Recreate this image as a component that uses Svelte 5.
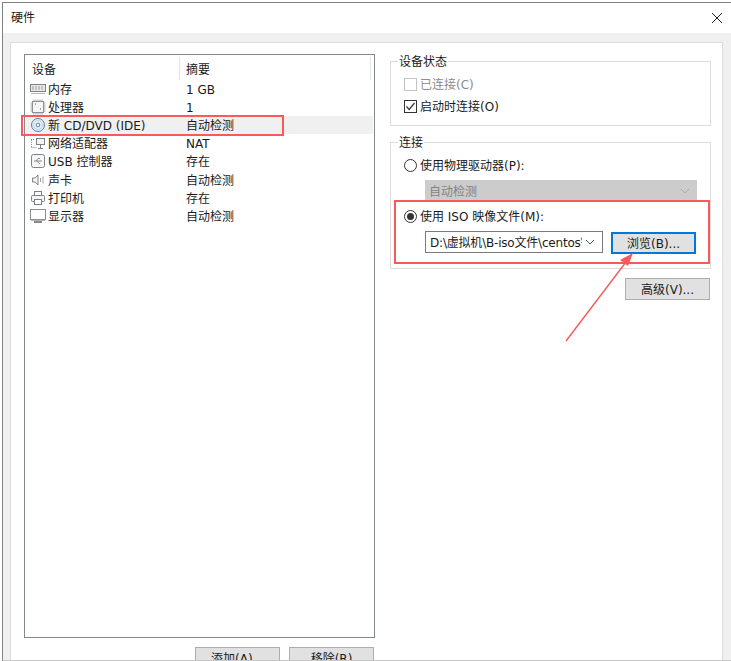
<script>
  const devices = [
    { name: "内存", summary: "1 GB", icon: "mem" },
    { name: "处理器", summary: "1", icon: "cpu" },
    { name: "新 CD/DVD (IDE)", summary: "自动检测", icon: "cd", selected: true },
    { name: "网络适配器", summary: "NAT", icon: "net" },
    { name: "USB 控制器", summary: "存在", icon: "usb" },
    { name: "声卡", summary: "自动检测", icon: "snd" },
    { name: "打印机", summary: "存在", icon: "prn" },
    { name: "显示器", summary: "自动检测", icon: "mon" }
  ];
</script>

<div class="page">
  <div class="window">
    <div class="titlebar">
      <span>硬件</span>
      <svg class="close" width="12" height="12" viewBox="0 0 12 12">
        <path d="M1 1L11 11M11 1L1 11" stroke="#222" stroke-width="1" fill="none" />
      </svg>
    </div>

    <div class="body">
      <div class="panel">
        <div class="left">
          <div class="list">
            <div class="row head">
              <div class="c1"><span class="t">设备</span></div>
              <div class="c2">摘要</div>
            </div>
            {#each devices as d}
              <div class="row" class:selected={d.selected}>
                <div class="c1">
                  <svg class="icon" width="16" height="16" viewBox="0 0 16 16" fill="none" stroke="#7d8287">
                    {#if d.icon === "mem"}
                      <rect x="0.5" y="3.5" width="15" height="7" fill="#e8e8e8" />
                      <path d="M2 6h12M2 8h12" stroke="#a0a0a0" stroke-dasharray="2 1" />
                      <path d="M1 12.5h14" stroke="#b5b5b5" />
                    {:else if d.icon === "cpu"}
                      <rect x="2.5" y="2.5" width="11" height="11" fill="#f6f6f6" stroke="#8a8a8a" />
                      <path d="M4 0.5v2M6 0.5v2M8 0.5v2M10 0.5v2M12 0.5v2M4 13.5v2M6 13.5v2M8 13.5v2M10 13.5v2M12 13.5v2M0.5 4h2M0.5 6h2M0.5 8h2M0.5 10h2M0.5 12h2M13.5 4h2M13.5 6h2M13.5 8h2M13.5 10h2M13.5 12h2" stroke="#a2a2a2" />
                      <path d="M5 5h1M10 10h1" stroke="#555" />
                    {:else if d.icon === "cd"}
                      <circle cx="8" cy="8" r="6.5" fill="#e2eff8" stroke="#5f8196" />
                      <path d="M3.5 8a4.5 4.5 0 0 1 4.5-4.5" stroke="#fff" />
                      <circle cx="8" cy="8" r="4.5" stroke="#bcd4e2" />
                      <circle cx="8" cy="8" r="1.8" fill="#fff" stroke="#5f8196" />
                    {:else if d.icon === "net"}
                      <rect x="6.5" y="3.5" width="8" height="6" fill="#f4f4f4" />
                      <path d="M10.5 10v3M8 13.5h5" />
                      <path d="M1 4.5h4M1.5 5v7M1.5 12.5h6" stroke="#8d8d8d" stroke-dasharray="1 1" />
                    {:else if d.icon === "usb"}
                      <rect x="1.5" y="1.5" width="13" height="13" rx="2" fill="#f7f7f7" />
                      <path d="M4 8h8M6 8l2-2.5h2M7 8l2 2.5h1" stroke="#8b8b8b" />
                    {:else if d.icon === "snd"}
                      <path d="M2.5 6h2.5l3-3v10l-3-3H2.5z" fill="#f4f4f4" />
                      <path d="M10.5 6v4M13 4.5v7" stroke="#a5a5a5" />
                    {:else if d.icon === "prn"}
                      <rect x="4.5" y="1.5" width="7" height="4" fill="#fff" />
                      <rect x="1.5" y="5.5" width="13" height="6" rx="1" fill="#f4f4f4" />
                      <rect x="4.5" y="9.5" width="7" height="5" fill="#fff" />
                    {:else}
                      <rect x="0.5" y="1.5" width="15" height="10" fill="#fff" stroke="#8d8d8d" />
                      <path d="M1 12.5h14" stroke="#b5b5b5" />
                      <path d="M4 14h8" stroke="#8a8a8a" stroke-width="2" />
                    {/if}
                  </svg>
                  <span class="t">{d.name}</span>
                </div>
                <div class="c2"><span class="t">{d.summary}</span></div>
              </div>
            {/each}
          </div>
          <div class="list-actions">
            <div class="btn"><span class="t">添加(A)...</span></div>
            <div class="btn"><span class="t">移除(R)</span></div>
          </div>
        </div>

        <div class="right">
          <fieldset class="status">
            <legend>设备状态</legend>
            <div class="opt disabled"><span class="check"></span><span class="t">已连接(C)</span></div>
            <div class="opt">
              <span class="check on">
                <svg width="11" height="11" viewBox="0 0 11 11"><path d="M1.5 5.5L4.2 8.5L9.5 2" stroke="#333" fill="none" stroke-width="1.2" /></svg>
              </span>
              <span class="t">启动时连接(O)</span>
            </div>
          </fieldset>

          <fieldset class="conn">
            <legend>连接</legend>
            <div class="opt"><span class="radio"></span><span class="t">使用物理驱动器(P):</span></div>
            <div class="select off">
              <span class="t">自动检测</span>
              <svg width="10" height="6" viewBox="0 0 10 6"><path d="M1 1L5 5L9 1" stroke="#aaa" fill="none" /></svg>
            </div>
            <div class="opt iso"><span class="radio on"></span><span class="t">使用 ISO 映像文件(M):</span></div>
            <div class="iso-row">
              <div class="select path">
                <span class="t path-text">D:\虚拟机\B-iso文件\centos镜像</span>
                <svg width="10" height="6" viewBox="0 0 10 6"><path d="M1 1L5 5L9 1" stroke="#555" fill="none" /></svg>
              </div>
              <div class="btn browse"><span class="t">浏览(B)...</span></div>
            </div>
          </fieldset>

          <div class="advanced"><div class="btn"><span class="t">高级(V)...</span></div></div>
        </div>
      </div>
    </div>
  </div>

  <!-- red annotations on top of the screenshot -->
  <div class="mark mark-device"></div>
  <div class="mark mark-iso"></div>
  <svg class="arrow" width="731" height="661" viewBox="0 0 731 661">
    <path d="M566 341L626 262" stroke="#f75a5a" stroke-width="1.4" fill="none" />
    <path d="M633 253L628 266L620 260Z" fill="#f75a5a" />
  </svg>
</div>

<style>
  :global(body) {
    margin: 0;
    background: #fff;
  }

  .page {
    position: relative;
    width: 731px;
    height: 661px;
    overflow: hidden;
    font-family: "DejaVu Sans", "Noto Sans CJK SC", sans-serif;
    font-size: 12px;
    line-height: 18px;
    color: #1a1a1a;
    padding: 2px 0 0 2px;
    box-sizing: border-box;
  }

  /* text sits a pixel lower than the centre of its box */
  .t {
    padding-top: 2px;
  }

  .window {
    height: 657px;
    border-top: 1px solid #808080;
    border-left: 1px solid #808080;
    border-bottom: 1px solid #c8c8c8;
    display: flex;
    flex-direction: column;
    overflow: hidden;
  }

  .titlebar {
    height: 30px;
    flex: none;
    display: flex;
    align-items: center;
    justify-content: space-between;
    padding: 0 8px;
    background: #fff;
  }

  .body {
    flex: 1;
    background: #f0f0f0;
    padding: 9px 8px 0 7px;
    min-height: 0;
  }

  .panel {
    height: 640px;
    background: #fff;
    border: 1px solid #dcdcdc;
    display: flex;
    gap: 15px;
    padding: 11px 0 0 13px;
    box-sizing: border-box;
  }

  .left {
    width: 351px;
    flex: none;
  }

  .list {
    height: 584px;
    box-sizing: border-box;
    border: 1px solid #828790;
    padding-right: 1px;
  }

  .row {
    display: flex;
    height: 18.1px;
    align-items: center;
    padding-right: 1px;
  }

  .row.selected {
    background: #f0f0f0;
  }

  .head {
    height: 25px;
    padding-top: 2px;
    box-sizing: border-box;
  }

  .c1 {
    width: 155px;
    display: flex;
    align-items: center;
    gap: 2px;
    padding-left: 5px;
    box-sizing: border-box;
    flex: none;
  }

  .head .c1 {
    padding-left: 7px;
    height: 23px;
    border-right: 1px solid #e5e5e5;
  }

  .c2 {
    padding-left: 6px;
    flex: 1;
    display: flex;
    align-items: center;
  }

  .head .c2 {
    height: 23px;
    padding-top: 2px;
    box-sizing: border-box;
    border-right: 1px solid #e5e5e5;
    margin-right: 1px;
  }

  .icon {
    flex: none;
  }

  .list-actions {
    display: flex;
    justify-content: flex-end;
    gap: 9px;
    margin-top: 9px;
  }

  .btn {
    width: 85px;
    height: 22px;
    box-sizing: border-box;
    background: #e1e1e1;
    border: 1px solid #adadad;
    display: flex;
    align-items: center;
    justify-content: center;
    flex: none;
  }

  .list-actions .btn:last-child {
    margin-right: 1px;
  }

  .right {
    width: 321px;
    flex: none;
  }

  fieldset {
    margin: 0;
    border: 1px solid #dcdcdc;
    padding: 0;
    min-width: 0;
  }

  legend {
    margin-left: -6px;
    padding: 1px 1px 0;
    line-height: 14px;
  }

  .status {
    height: 72px;
    box-sizing: border-box;
    margin-bottom: 9px;
    padding: 6px 0 0 13px;
  }

  .conn {
    height: 134px;
    box-sizing: border-box;
    padding: 6px 13px 0 13px;
  }

  .opt {
    display: flex;
    align-items: center;
    gap: 3px;
    height: 18px;
    margin-bottom: 4px;
  }

  .opt.disabled {
    color: #8c8c8c;
  }

  .check {
    width: 13px;
    height: 13px;
    box-sizing: border-box;
    border: 1px solid #c4c4c4;
    display: flex;
    align-items: center;
    justify-content: center;
    background: #fff;
  }

  .check.on {
    border-color: #333;
  }

  .radio {
    width: 13px;
    height: 13px;
    box-sizing: border-box;
    border: 1px solid #333;
    border-radius: 50%;
    display: flex;
    align-items: center;
    justify-content: center;
  }

  .radio.on::after {
    content: "";
    width: 7px;
    height: 7px;
    border-radius: 50%;
    background: #333;
  }

  .select {
    display: flex;
    align-items: center;
    justify-content: space-between;
    box-sizing: border-box;
    padding: 0 7px 0 4px;
  }

  .select.off {
    margin-left: 21px;
    margin-top: 6px;
    margin-bottom: 6px;
    width: 272px;
    height: 21px;
    background: #cccccc;
    color: #838383;
  }

  .iso {
    margin-bottom: 6px;
  }

  .iso-row {
    display: flex;
    align-items: flex-start;
    margin-left: 21px;
    gap: 8px;
  }

  .select.path {
    width: 178px;
    height: 22px;
    border: 1px solid #7a7a7a;
    background: #fff;
    padding-left: 4px;
  }

  .path-text {
    width: 152px;
    overflow: hidden;
    white-space: nowrap;
    letter-spacing: -0.2px;
  }

  .browse {
    border: 2px solid #0078d7;
    margin-top: 1px;
  }

  .advanced {
    display: flex;
    justify-content: flex-end;
    margin-top: 9px;
  }

  .advanced .btn {
    margin-right: 1px;
  }

  .mark {
    position: absolute;
    box-sizing: border-box;
    border: 2px solid #f75a5a;
  }

  .mark-device {
    left: 21px;
    top: 115px;
    width: 263px;
    height: 21px;
  }

  .mark-iso {
    left: 394px;
    top: 200px;
    width: 316px;
    height: 64px;
  }

  .arrow {
    position: absolute;
    left: 0;
    top: 0;
    pointer-events: none;
  }
</style>
